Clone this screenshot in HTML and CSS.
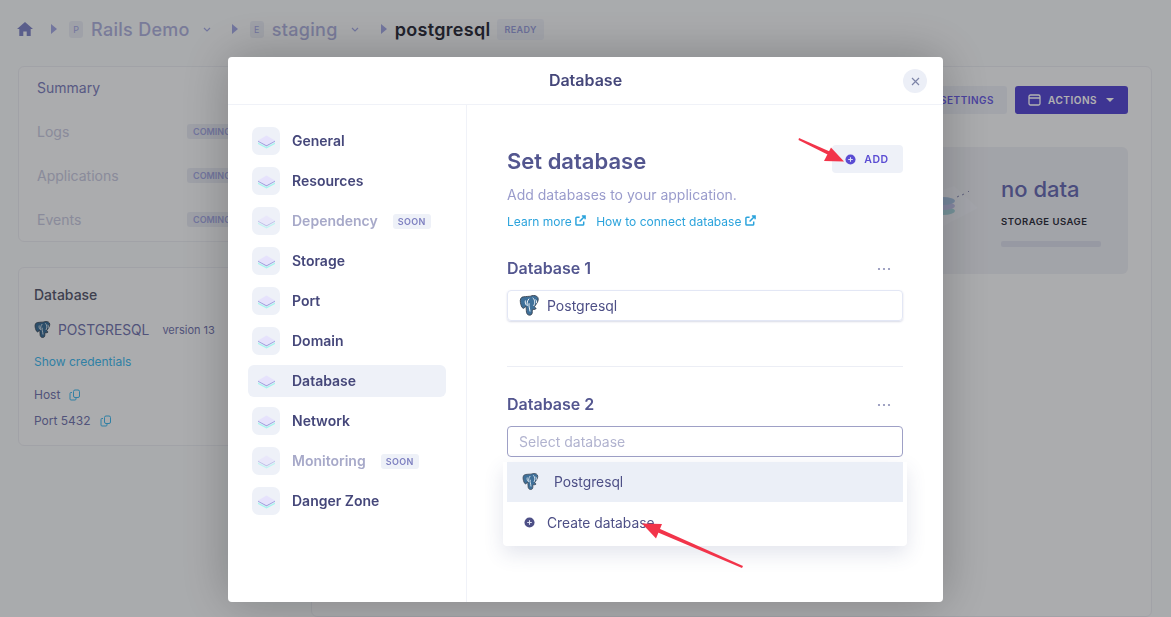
FILE: index.html
```html
<!DOCTYPE html>
<html lang="en">
<head>
    <meta charset="UTF-8">
    <title>Database</title>
    <link rel="stylesheet" href="styles.css">
</head>
<body>
<svg class="defs" width="0" height="0">
  <symbol id="pg" viewBox="0 0 24 24">
    <path d="M5 2C2 2 1 5 1.500 8c.4 2.500 1.500 6 3 6.500 1.300.4 2-1.500 2.800-2.500.5 1.500.7 3 .7 5 0 3 1 5 3.500 5s3-1.500 3-4c0-1 .2-2 .5-2.500 2 .5 3.500 0 3.700-1-1-.5-1.700-1-1.700-2 2-3 4-5 4-8 0-3-3-4-5-4-1.500 0-2.500.4-3.500.8C11 1.600 8 1.500 5 2z" fill="#3f7099" stroke="#3a4452" stroke-width="1"/>
    <path d="M11 4c-2 2-2.500 5-2 8M15 3c2 2 3 5 1 9M11 9c-.5 3 .5 5 1 9M7 6c-.5 2 0 4 1 5M18 5c1 1 1.500 2 1 4" fill="none" stroke="#fff" stroke-width="1"/>
  </symbol>
  <symbol id="layers" viewBox="0 0 28 28">
    <path d="M6 15.500l8.500 4.500 8.500-4.500v1.500l-8.500 4.500L6 17z" fill="#a8f5ee"/>
    <path d="M6 13.500l8.500 4.500 8.500-4.500v1.300L14.500 19.500 6 14.800z" fill="#a6a7e2"/>
    <path d="M6 13.500L14.500 8.500l8.500 5-8.500 4.500z" fill="#e6e2fc"/>
  </symbol>
  <symbol id="plus" viewBox="0 0 12 12">
    <circle cx="6" cy="6" r="5.500" fill="currentColor"/>
    <path d="M3.500 6h5M6 3.500v5" stroke="#dfe3f5" stroke-width="1.200"/>
  </symbol>
  <symbol id="ext" viewBox="0 0 12 12">
    <path d="M9.500 7v3a1 1 0 0 1-1 1H2a1 1 0 0 1-1-1V3.500a1 1 0 0 1 1-1h3M5 7l5.500-5.500M7.500 1h3.500v3.500" fill="none" stroke="currentColor" stroke-width="1.600"/>
  </symbol>
  <symbol id="copy" viewBox="0 0 12 12">
    <path d="M3 3.500H2a1 1 0 0 0-1 1V10a1 1 0 0 0 1 1h4a1 1 0 0 0 1-1V9" fill="none" stroke="currentColor"/>
    <rect x="4.500" y="1" width="6" height="7.500" rx="1.500" fill="none" stroke="currentColor"/>
  </symbol>
  <symbol id="dots" viewBox="0 0 14 4">
    <circle cx="2" cy="2" r="1.100" fill="currentColor"/>
    <circle cx="7" cy="2" r="1.100" fill="currentColor"/>
    <circle cx="12" cy="2" r="1.100" fill="currentColor"/>
  </symbol>
</svg>

<div class="page">
  <div class="crumbs">
    <svg class="home" width="16" height="14" viewBox="0 0 16 14"><path d="M8 0L0 7h2.300v7h4V9.500h3.400V14h4V7H16z" fill="#8287c8"/></svg>
    <i class="tri tri-first"></i>
    <span class="letter">P</span>
    <span class="crumb">Rails Demo</span>
    <svg class="chev" width="8" height="5" viewBox="0 0 8 5"><path d="M1 1l3 3 3-3" fill="none" stroke="#a4a9e3" stroke-width="1.200"/></svg>
    <i class="tri"></i>
    <span class="letter">E</span>
    <span class="crumb">staging</span>
    <svg class="chev" width="8" height="5" viewBox="0 0 8 5"><path d="M1 1l3 3 3-3" fill="none" stroke="#a4a9e3" stroke-width="1.200"/></svg>
    <i class="tri tri-last"></i>
    <span class="crumb crumb-now">postgresql</span>
    <span class="ready">READY</span>
  </div>

  <div class="columns">
    <div class="side">
      <div class="card menu">
        <div class="menu-row menu-now">Summary</div>
        <div class="menu-row">Logs <span class="coming">COMING SOON</span></div>
        <div class="menu-row">Applications <span class="coming">COMING SOON</span></div>
        <div class="menu-row">Events <span class="coming">COMING SOON</span></div>
      </div>
      <div class="card dbcard">
        <div class="dbcard-title">Database</div>
        <div class="dbcard-name">
          <svg width="18" height="18"><use href="#pg"/></svg>
          <span class="dbcard-pg">POSTGRESQL</span>
          <span class="dbcard-ver">version 13</span>
        </div>
        <div class="dbcard-show">Show credentials</div>
        <div class="dbcard-line">Host <svg width="12" height="12"><use href="#copy"/></svg></div>
        <div class="dbcard-line">Port 5432 <svg width="12" height="12"><use href="#copy"/></svg></div>
      </div>
    </div>

    <div class="main">
      <div class="main-btns">
        <span class="btn-settings">SETTINGS</span>
        <span class="btn-actions">
          <svg width="13" height="12" viewBox="0 0 13 12"><rect x="1" y="1" width="11" height="10" rx="1.500" fill="none" stroke="#fff" stroke-width="1.300"/><path d="M1 4h11" stroke="#fff" stroke-width="1.500"/></svg>
          ACTIONS
          <i class="caret"></i>
        </span>
      </div>
      <div class="usage">
        <svg class="usage-art" width="100" height="60" viewBox="0 0 100 60">
          <path d="M15 30L76 8l24 22-50 26z" fill="#eceef6"/>
          <g opacity=".6">
            <ellipse cx="65" cy="33" rx="12" ry="4" fill="#7fc4cf"/>
            <ellipse cx="65" cy="28" rx="12" ry="4" fill="#a6a7e2"/>
            <ellipse cx="65" cy="23" rx="12" ry="4" fill="#7fa9d8"/>
          </g>
          <path d="M79 19l2-1M84 17l2-1M90 14l1-1" stroke="#8a8db5" stroke-width="1"/>
        </svg>
        <div class="usage-info">
          <div class="usage-num">no data</div>
          <div class="usage-label">STORAGE USAGE</div>
          <div class="usage-bar"></div>
        </div>
      </div>
    </div>
  </div>
</div>

<div class="dim"></div>

<div class="modal">
  <div class="modal-head">
    <span>Database</span>
    <span class="close"><svg width="9" height="9" viewBox="0 0 9 9"><path d="M1 1l7 7M8 1L1 8" stroke="#7d84a8" stroke-width="1.200"/></svg></span>
  </div>
  <div class="modal-body">
    <div class="nav">
      <div class="nav-item"><span class="nav-ico"><svg width="28" height="28"><use href="#layers"/></svg></span>General</div>
      <div class="nav-item"><span class="nav-ico"><svg width="28" height="28"><use href="#layers"/></svg></span>Resources</div>
      <div class="nav-item nav-off"><span class="nav-ico"><svg width="28" height="28"><use href="#layers"/></svg></span>Dependency<span class="soon">SOON</span></div>
      <div class="nav-item"><span class="nav-ico"><svg width="28" height="28"><use href="#layers"/></svg></span>Storage</div>
      <div class="nav-item"><span class="nav-ico"><svg width="28" height="28"><use href="#layers"/></svg></span>Port</div>
      <div class="nav-item"><span class="nav-ico"><svg width="28" height="28"><use href="#layers"/></svg></span>Domain</div>
      <div class="nav-item nav-on"><span class="nav-ico"><svg width="28" height="28"><use href="#layers"/></svg></span>Database</div>
      <div class="nav-item"><span class="nav-ico"><svg width="28" height="28"><use href="#layers"/></svg></span>Network</div>
      <div class="nav-item nav-off"><span class="nav-ico"><svg width="28" height="28"><use href="#layers"/></svg></span>Monitoring<span class="soon">SOON</span></div>
      <div class="nav-item"><span class="nav-ico"><svg width="28" height="28"><use href="#layers"/></svg></span>Danger Zone</div>
    </div>

    <div class="content">
      <div class="set-head">
        <h2 class="set-title">Set database</h2>
        <span class="add"><svg width="11" height="11"><use href="#plus"/></svg>ADD</span>
      </div>
      <p class="set-sub">Add databases to your application.</p>
      <div class="links">
        <a>Learn more <svg width="11" height="11"><use href="#ext"/></svg></a>
        <a>How to connect database <svg width="11" height="11"><use href="#ext"/></svg></a>
      </div>

      <div class="db-head db-head-first">
        <span>Database 1</span>
        <svg width="14" height="4"><use href="#dots"/></svg>
      </div>
      <div class="select select-filled">
        <svg width="22" height="22"><use href="#pg"/></svg>
        Postgresql
      </div>

      <hr class="rule">

      <div class="db-head">
        <span>Database 2</span>
        <svg width="14" height="4"><use href="#dots"/></svg>
      </div>
      <div class="select select-open">Select database</div>
      <div class="drop">
        <div class="drop-item drop-on">
          <svg width="18" height="18"><use href="#pg"/></svg>
          Postgresql
        </div>
        <div class="drop-item drop-new">
          <svg width="11" height="11"><use href="#plus"/></svg>
          Create database
        </div>
      </div>
    </div>
  </div>
</div>

<svg class="arrows" width="1171" height="617" viewBox="0 0 1171 617">
  <path d="M799 138L832 152.500l-1.500 3.500L798.500 140z" fill="#f2344a"/>
  <path d="M844 161.500L824 161l7-13.500z" fill="#f2344a"/>
  <path d="M743 566L659 528.500l-1.500 3.700L742 568z" fill="#f2344a"/>
  <path d="M642 523.500L662 524l-6 14.500z" fill="#f2344a"/>
</svg>
</body>
</html>
```

FILE: styles.css
```css
* {
  box-sizing: border-box;
}
html, body {
  margin: 0;
  height: 100%;
  overflow: hidden;
}
body {
  font-family: Inter, "Liberation Sans", sans-serif;
  color: #4d4f86;
  background: #f3f5f8;
}
.defs {
  position: absolute;
}

/* page behind the dialog */
.page {
  padding: 0 19px 0 17px;
  height: 617px;
  display: flex;
  flex-direction: column;
}
.crumbs {
  display: flex;
  align-items: center;
  height: 58px;
}
.home {
  flex: none;
}
.tri {
  width: 0;
  height: 0;
  border-left: 6px solid #a4a9e3;
  border-top: 5px solid transparent;
  border-bottom: 5px solid transparent;
  margin: 0 12px 0 0;
}
.tri-first {
  margin-left: 18px;
}
.tri-last {
  margin-left: 1px;
  margin-right: 8px;
}
.letter {
  width: 14px;
  height: 17px;
  border-radius: 3px;
  background: #e4e7f1;
  font-size: 9px;
  line-height: 17px;
  text-align: center;
  color: #a4a9e3;
}
.crumb {
  margin-left: 8px;
  font-size: 18px;
  font-weight: 500;
  letter-spacing: .3px;
  color: #aeb1dc;
}
.crumb-now {
  margin-left: 0;
  font-weight: 600;
  color: #30313f;
}
.chev {
  margin: 0 21px 0 13px;
}
.ready {
  margin-left: 7px;
  padding: 0 7px;
  height: 21px;
  line-height: 21px;
  font-size: 9px;
  font-weight: 600;
  letter-spacing: .4px;
  border-radius: 3px;
  background: #e8ebf4;
  color: #9a9fdc;
}
.columns {
  display: flex;
  flex: 1;
  padding: 8px 0 0 1px;
}
.side {
  width: 274px;
  flex: none;
}
.card {
  background: #f5f6f9;
  border: 1px solid #e7e9f0;
  border-radius: 6px;
}
.menu {
  height: 176px;
  padding: 0 18px;
}
.menu-row {
  height: 44px;
  padding-bottom: 3px;
  display: grid;
  grid-template-columns: 150px auto;
  justify-content: start;
  align-items: center;
  font-size: 14px;
  color: #c6c8de;
  white-space: nowrap;
}
.menu-now {
  color: #7f82bd;
}
.coming {
  padding: 0 6px;
  height: 15px;
  line-height: 15px;
  border-radius: 3px;
  background: #e4e7f1;
  font-size: 9px;
  font-weight: 600;
  color: #a4a9e3;
}
.dbcard {
  margin-top: 25px;
  height: 179px;
  padding: 18px 15px;
  font-size: 12px;
  color: #7578b0;
}
.dbcard-title {
  font-size: 14px;
  font-weight: 500;
  color: #5a5c72;
}
.dbcard-name {
  display: flex;
  align-items: center;
  margin-top: 17px;
  height: 20px;
}
.dbcard-pg {
  margin-left: 6px;
  font-size: 13.800px;
}
.dbcard-ver {
  margin-left: 13px;
  font-size: 11px;
}
.dbcard-show {
  margin-top: 14px;
  color: #45b8ec;
}
.dbcard-line {
  display: flex;
  align-items: center;
  gap: 9px;
  margin-top: 11px;
  height: 15px;
}
.dbcard-show + .dbcard-line {
  margin-top: 18px;
}
.dbcard-line svg {
  color: #45b8ec;
}
.main {
  flex: 1;
  margin-left: 19px;
  background: #f5f6f9;
  border: 1px solid #e7e9f0;
  border-radius: 6px;
  padding: 19px 23px;
}
.main-btns {
  display: flex;
  justify-content: flex-end;
  gap: 8px;
}
.btn-settings,
.btn-actions {
  height: 28px;
  display: flex;
  align-items: center;
  border-radius: 3px;
  font-size: 10px;
  font-weight: 600;
  letter-spacing: .5px;
}
.btn-settings {
  padding: 0 13px 0 50px;
  background: #e8ebf4;
  color: #6d61e4;
}
.btn-actions {
  padding: 0 14px 0 13px;
  gap: 7px;
  background: #5a4cd3;
  color: #fff;
}
.caret {
  margin-left: 2px;
  border-top: 4px solid #fff;
  border-left: 4px solid transparent;
  border-right: 4px solid transparent;
}
.usage {
  margin-top: 33px;
  height: 127px;
  display: flex;
  justify-content: flex-end;
  border-radius: 6px;
  background: #e9ebf2;
}
.usage-art {
  flex: none;
  margin: 31px 23px 0 0;
}
.usage-info {
  width: 127px;
  padding-top: 28px;
}
.usage-num {
  font-size: 22px;
  font-weight: 500;
  line-height: 28px;
  color: #6a6db4;
}
.usage-label {
  margin-top: 12px;
  font-size: 9.500px;
  line-height: 13px;
  font-weight: 600;
  letter-spacing: .5px;
  color: #30313f;
}
.usage-bar {
  margin-top: 13px;
  width: 100px;
  height: 6px;
  border-radius: 2px;
  background: #d8dcea;
}
.dim {
  position: fixed;
  inset: 0;
  background: rgba(0, 0, 0, .3);
}

/* dialog */
.modal {
  position: fixed;
  left: 228px;
  top: 57px;
  width: 715px;
  height: 545px;
  display: flex;
  flex-direction: column;
  background: #fff;
  border-radius: 4px;
  box-shadow: 0 0 50px rgba(0, 0, 0, .25);
}
.modal-head {
  position: relative;
  flex: none;
  height: 48px;
  padding-bottom: 1px;
  display: flex;
  align-items: center;
  justify-content: center;
  border-bottom: 1px solid #f0f2f8;
  font-size: 16px;
  font-weight: 600;
  color: #45477a;
}
.close {
  position: absolute;
  right: 16px;
  top: 12px;
  width: 24px;
  height: 24px;
  display: flex;
  align-items: center;
  justify-content: center;
  border-radius: 50%;
  background: #eceff7;
}
.modal-body {
  flex: 1;
  display: flex;
}
.nav {
  flex: none;
  width: 239px;
  padding: 20px 20px 0;
  border-right: 1px solid #f0f2f8;
}
.nav-item {
  height: 32px;
  margin-bottom: 8px;
  display: flex;
  align-items: flex-start;
  padding-left: 4px;
  border-radius: 6px;
  line-height: 31px;
  font-size: 14px;
  font-weight: 600;
  color: #45477a;
}
.nav-ico {
  width: 28px;
  height: 28px;
  margin: 2px 12px 0 0;
  border-radius: 7px;
  background: #eef1f8;
}
.nav-ico svg {
  display: block;
}
.nav-on {
  background: #eef1f8;
}
.nav-off {
  color: #a7a9c9;
}
.nav-off .nav-ico svg {
  opacity: .6;
}
.soon {
  margin: 9px 0 0 15px;
  padding: 0 5px;
  height: 15px;
  line-height: 15px;
  border-radius: 3px;
  background: #eef1f8;
  font-size: 9px;
  letter-spacing: .4px;
  color: #7d7fc0;
}
.content {
  flex: 1;
  padding: 40px 40px 0;
}
.set-head {
  display: flex;
  align-items: center;
  justify-content: space-between;
  height: 28px;
}
.set-title {
  margin: 4px 0 0;
  font-size: 22px;
  font-weight: 600;
  color: #53568f;
}
.add {
  width: 71px;
  height: 28px;
  padding-right: 1px;
  display: flex;
  align-items: center;
  justify-content: center;
  gap: 8px;
  border-radius: 4px;
  background: #eef1f8;
  font-size: 10.500px;
  font-weight: 600;
  letter-spacing: .5px;
  color: #5a4cd3;
}
.set-sub {
  margin: 13px 0 0;
  font-size: 14px;
  line-height: 17px;
  color: #9a9ccc;
}
.links {
  display: flex;
  gap: 10px;
  margin-top: 11px;
  font-size: 12px;
  line-height: 16px;
  color: #2ba3dc;
}
.db-head {
  display: flex;
  align-items: center;
  justify-content: space-between;
  height: 20px;
  padding-right: 12px;
  font-size: 16px;
  font-weight: 600;
  color: #53568f;
}
.db-head svg {
  margin-top: 2px;
  color: #8a8db5;
}
.db-head-first {
  margin-top: 28px;
}
.select {
  display: flex;
  align-items: center;
  gap: 6px;
  height: 31px;
  margin-top: 12px;
  padding-left: 11px;
  border-radius: 4px;
  font-size: 14px;
}
.select-filled {
  border: 1px solid #e3e7f5;
  box-shadow: 0 1px 2px rgba(60, 70, 130, .2);
}
.select-open {
  border: 1px solid #9ea0c6;
  color: #b1b3cf;
}
.rule {
  margin: 45px 0 27px;
  border: 0;
  border-top: 1px solid #eceef5;
}
.drop {
  margin: 5px -4px 0;
  padding: 0 4px 4px;
  height: 84px;
  border-radius: 0 0 4px 4px;
  background: #fff;
  box-shadow: 0 8px 20px rgba(60, 70, 130, .14);
  font-size: 13.800px;
}
.drop-item {
  display: flex;
  align-items: center;
}
.drop-on {
  height: 40px;
  padding-left: 15px;
  gap: 14px;
  background: #ebeff7;
}
.drop-new {
  height: 41px;
  padding-left: 17px;
  gap: 12px;
}
.arrows {
  position: fixed;
  left: 0;
  top: 0;
}
```
